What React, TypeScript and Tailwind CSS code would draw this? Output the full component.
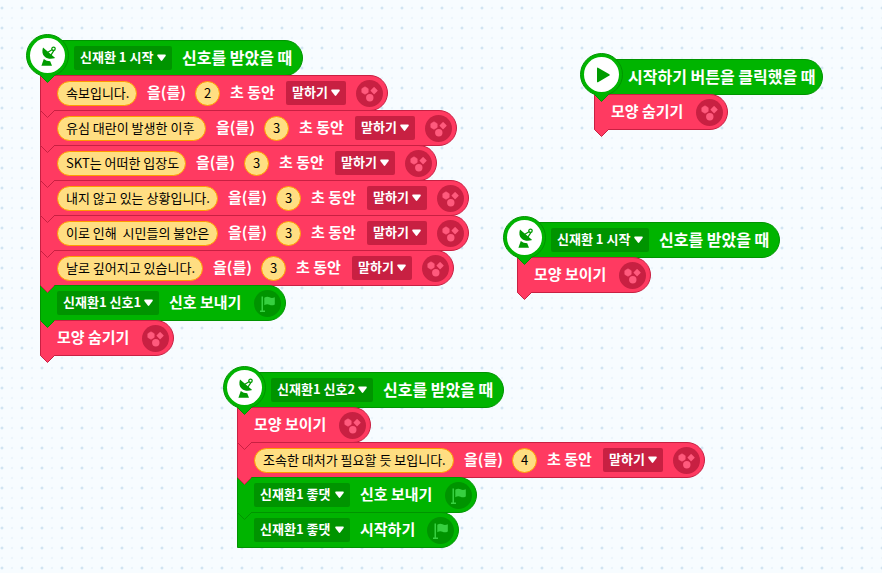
import { type ReactNode } from "react";

type Tone = "start" | "look";

const tones = {
  start: { body: "border-[#009400] bg-[#00b400]", field: "bg-[#009400]", fill: "fill-[#00b400]", line: "stroke-[#009400]", glyph: "fill-[#37d040]" },
  look: { body: "border-[#c82042] bg-[#ff3a61]", field: "bg-[#c82042]", fill: "fill-[#ff3a61]", line: "stroke-[#c82042]", glyph: "fill-[#ff5a7d]" },
};

function Tail({ tone }: { tone: Tone }) {
  return (
    <svg className="absolute -left-px top-[33px] z-20 h-[10px] w-4" viewBox="0 0 16 10" aria-hidden="true">
      <path d="M1 0V2L7.5 8.5L14 2V0Z" className={tones[tone].fill} />
      <path d="M0.5 1.5L7.5 8.5L14.5 1.5" fill="none" className={tones[tone].line} />
    </svg>
  );
}

function Block({ tone, tail = true, children }: { tone: Tone; tail?: boolean; children: ReactNode }) {
  return (
    <li className={`relative -mt-px flex h-9 w-max items-center gap-2.5 rounded-r-full border pr-1 pl-4 ${tones[tone].body}`}>
      {children}
      {tail && <Tail tone={tone} />}
    </li>
  );
}

function Hat({ icon, children }: { icon: ReactNode; children: ReactNode }) {
  return (
    <li className="relative flex h-9 w-max items-center gap-2.5 rounded-r-full border border-[#009400] bg-[#00b400] pr-3 pl-[33px]">
      <span className="absolute -top-[7px] -left-[15px] z-10 flex size-[43px] items-center justify-center rounded-full border border-[#009400] bg-[#00b400]">
        <span className="flex size-[35px] items-center justify-center rounded-full bg-white">{icon}</span>
      </span>
      {children}
      <Tail tone="start" />
    </li>
  );
}

function Label({ width, children }: { width: string; children: ReactNode }) {
  return <span className={`pb-0.5 text-[15px] leading-5 font-bold whitespace-nowrap text-white ${width}`}>{children}</span>;
}

function HatLabel({ width, children }: { width: string; children: ReactNode }) {
  return <span className={`pb-0.5 text-base leading-5 font-bold whitespace-nowrap text-white ${width}`}>{children}</span>;
}

function Dropdown({ tone, label, value, width }: { tone: Tone; label: string; value: string; width: string }) {
  return (
    <span className={`relative h-6 ${width}`}>
      <select aria-label={label} className={`block h-6 w-full appearance-none rounded-xs pb-0.5 pl-1.5 text-[13px] leading-5 font-bold text-white ${tones[tone].field}`}>
        <option>{value}</option>
      </select>
      <svg className="pointer-events-none absolute top-2 right-1.5 h-2 w-[9px] fill-white" viewBox="0 0 9 8" aria-hidden="true">
        <path d="M1 0.5H8Q9.2 0.8 8.6 2L5.2 6.6Q4.5 7.4 3.8 6.6L0.4 2Q-0.2 0.8 1 0.5Z" />
      </svg>
    </span>
  );
}

function Value({ label, value, width }: { label: string; value: string; width: string }) {
  return (
    <input
      aria-label={label}
      defaultValue={value}
      className={`h-[25px] rounded-full border border-[#ff9c00] bg-[#ffde82] pb-0.5 text-[13px] leading-5 text-black ${width}`}
    />
  );
}

function ShapesIcon() {
  return (
    <svg className="size-[27px]" viewBox="0 0 27 27" aria-hidden="true">
      <circle cx="13.5" cy="13.5" r="13.5" className="fill-[#c82042]" />
      <g className={tones.look.glyph}>
        <path d="M9 6.8L12.2 8.7V12.4L9 14.3L5.8 12.4V8.7Z" className="stroke-[#ff5a7d]" strokeWidth="0.6" strokeLinejoin="round" />
        <rect x="15.4" y="7.9" width="5.4" height="5.4" rx="0.6" transform="rotate(45 18.1 10.6)" />
        <circle cx="13.8" cy="17.7" r="3.7" />
      </g>
    </svg>
  );
}

function FlagIcon() {
  return (
    <svg className="size-[27px]" viewBox="0 0 27 27" aria-hidden="true">
      <circle cx="13.5" cy="13.5" r="13.5" className="fill-[#009400]" />
      <g className={tones.start.glyph}>
        <path d="M7.5 6.5H9V20.5H11V22H6V20.5H7.5Z" />
        <path d="M10.3 7.8Q13 6 15.5 7.3Q18 8.6 20.8 7.2V14.4Q18 16 15.5 14.7Q13 13.5 10.3 15.2Z" />
      </g>
    </svg>
  );
}

function DishIcon() {
  return (
    <svg className="size-[22px] fill-[#009b00] stroke-[#009b00]" viewBox="0 0 22 22" aria-hidden="true">
      <path stroke="none" d="M6 2.4C4.8 6 5.2 9.6 7.8 11.8C10.4 14 14.4 14.4 18.2 13Z" />
      <path stroke="none" d="M6.8 14L4.4 20.8H15L13.2 16.2Q9.4 16.2 6.8 14Z" />
      <path fill="none" strokeWidth="1.2" d="M10.4 7.6L15.4 4.6M13.6 10.6L16.8 5.6" />
      <circle cx="16.5" cy="3.8" r="1.7" fill="white" strokeWidth="1.3" />
    </svg>
  );
}

function PlayIcon() {
  return (
    <svg className="size-[22px] fill-[#009b00]" viewBox="0 0 22 22" aria-hidden="true">
      <path d="M6 4.2Q6 3.2 7 3.7L18.4 10.2Q19.2 11 18.4 11.6L7 18.2Q6 18.7 6 17.7Z" />
    </svg>
  );
}

function SayBlock({ text, width, seconds }: { text: string; width: string; seconds: string }) {
  return (
    <Block tone="look">
      <Value label="말할 내용" value={text} width={`${width} pl-2`} />
      <Label width="w-[38px]">을(를)</Label>
      <Value label="초" value={seconds} width="w-[25px] text-center" />
      <Label width="w-[46px]">초 동안</Label>
      <Dropdown tone="look" label="말하기 방식" value="말하기" width="w-[60px]" />
      <ShapesIcon />
    </Block>
  );
}

function LookBlock({ text }: { text: string }) {
  return (
    <Block tone="look">
      <Label width="w-[75px]">{text}</Label>
      <ShapesIcon />
    </Block>
  );
}

function SignalHat({ signal, width }: { signal: string; width: string }) {
  return (
    <Hat icon={<DishIcon />}>
      <Dropdown tone="start" label="신호" value={signal} width={width} />
      <HatLabel width="w-[108px]">신호를 받았을 때</HatLabel>
    </Hat>
  );
}

const lines = [
  { text: "속보입니다.", width: "w-20", seconds: "2" },
  { text: "유심 대란이 발생한 이후", width: "w-[149px]", seconds: "3" },
  { text: "SKT는 어떠한 입장도", width: "w-[129px]", seconds: "3" },
  { text: "내지 않고 있는 상황입니다.", width: "w-[161px]", seconds: "3" },
  { text: "이로 인해  시민들의 불안은", width: "w-[161px]", seconds: "3" },
  { text: "날로 깊어지고 있습니다.", width: "w-[146px]", seconds: "3" },
];

export default function App() {
  return (
    <main className="relative min-h-screen overflow-hidden bg-[#f7fcff] bg-[radial-gradient(circle_at_12px_8px,#d0e4f2_1px,transparent_1.8px),radial-gradient(circle_at_2px_8px,#ebf5fc_1px,transparent_1.6px)] bg-size-[20px_20px,10px_10px] bg-position-[10px_0px,0px_0px] font-['Noto_Sans_CJK_KR',sans-serif]">
      <ul className="absolute top-10 left-10">
        <SignalHat signal="신재환 1 시작" width="w-[98px]" />
        {lines.map((line) => (
          <SayBlock key={line.text} {...line} />
        ))}
        <Block tone="start">
          <Dropdown tone="start" label="신호" value="신재환1 신호1" width="w-[102px]" />
          <Label width="w-[75px]">신호 보내기</Label>
          <FlagIcon />
        </Block>
        <LookBlock text="모양 숨기기" />
      </ul>

      <ul className="absolute top-[59px] left-[594px]">
        <Hat icon={<PlayIcon />}>
          <HatLabel width="w-[182px]">시작하기 버튼을 클릭했을 때</HatLabel>
        </Hat>
        <LookBlock text="모양 숨기기" />
      </ul>

      <ul className="absolute top-[222px] left-[517px]">
        <SignalHat signal="신재환 1 시작" width="w-[98px]" />
        <LookBlock text="모양 보이기" />
      </ul>

      <ul className="absolute top-[372px] left-[237px]">
        <SignalHat signal="신재환1 신호2" width="w-[102px]" />
        <LookBlock text="모양 보이기" />
        <SayBlock text="조속한 대처가 필요할 듯 보입니다." width="w-[200px]" seconds="4" />
        <Block tone="start">
          <Dropdown tone="start" label="신호" value="신재환1 좋댓" width="w-24" />
          <Label width="w-[75px]">신호 보내기</Label>
          <FlagIcon />
        </Block>
        <Block tone="start" tail={false}>
          <Dropdown tone="start" label="신호" value="신재환1 좋댓" width="w-24" />
          <Label width="w-[57px]">시작하기</Label>
          <FlagIcon />
        </Block>
      </ul>
    </main>
  );
}
